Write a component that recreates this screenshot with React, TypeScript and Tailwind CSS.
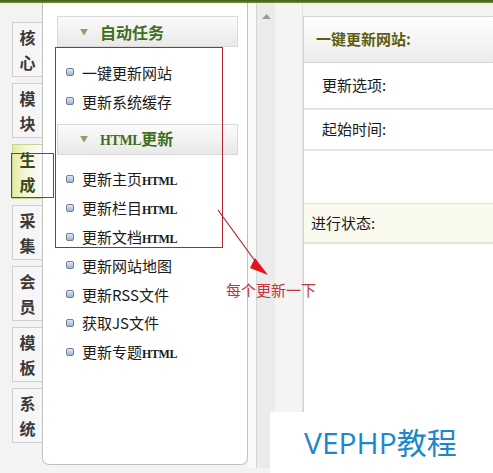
import React from "react";

const cjk = "font-['Noto_Sans_CJK_SC','Noto_Sans',sans-serif]";

const tabs = ["核心", "模块", "生成", "采集", "会员", "模板", "系统"];

function Html({ className = "" }: { className?: string }) {
  return (
    <span className={`font-['Liberation_Serif',serif] font-bold text-[12px] tracking-[-0.4px] ${className}`}>
      HTML
    </span>
  );
}

function Bullet() {
  return (
    <span className="w-[8px] h-[8px] rounded-[2px] border border-[#6f7f99] bg-gradient-to-b from-[#dfe8f5] to-[#9fb2cf] shrink-0" />
  );
}

function Item({ children }: { children: React.ReactNode }) {
  return (
    <div className="flex items-center gap-[8px] pl-[23px] h-[28.8px] text-[15px] text-[#1a1a1a]">
      <Bullet />
      <span className="leading-none">{children}</span>
    </div>
  );
}

function SectionHead({ children }: { children: React.ReactNode }) {
  return (
    <div className="ml-[14px] mr-[9px] h-[31px] flex items-center border border-[#dadada] bg-gradient-to-b from-[#fbfbfb] to-[#e9e9e9]">
      <span className="ml-[22px] text-[8px] text-[#86a266]">▼</span>
      <span className="ml-[12px] text-[16px] font-bold text-[#3f6e1c] leading-none">{children}</span>
    </div>
  );
}

export default function App() {
  return (
    <div className={`relative w-[493px] h-[473px] overflow-hidden bg-[#f3f3f3] ${cjk}`}>
      {/* top bar */}
      <div className="h-[3px] bg-gradient-to-b from-[#3f5d14] to-[#6f8f35]" />

      <div className="flex h-[465px]">
        {/* tabs */}
        <div className="w-[42px] pt-[19px] pl-[12px] flex flex-col gap-[6px]">
          {tabs.map((t, i) => (
            <div
              key={t}
              className={`w-[30px] h-[55px] flex flex-col items-center justify-center border border-r-0 text-[16px] font-bold leading-[25px] ${
                i === 2
                  ? "border-[#c9d393] bg-gradient-to-r from-[#e3ed9c] via-[#f6f8e4] to-[#fafafa] text-[#3b4a14]"
                  : "border-[#cfcfcf] bg-[#f6f6f6] text-[#3a3a3a]"
              }`}
            >
              <span>{t[0]}</span>
              <span>{t[1]}</span>
            </div>
          ))}
        </div>

        {/* left menu panel */}
        <div className="w-[206px] h-[462px] bg-white border-x border-b border-[#c2c2c2] rounded-b-[7px] pt-[13px]">
          <SectionHead>自动任务</SectionHead>
          <div className="pt-[11px] pb-[8px]">
            <Item>一键更新网站</Item>
            <Item>更新系统缓存</Item>
          </div>
          <SectionHead>
            <Html className="text-[14px] text-[#3f6e1c]" />更新
          </SectionHead>
          <div className="pt-[10px]">
            <Item>
              更新主页<Html />
            </Item>
            <Item>
              更新栏目<Html />
            </Item>
            <Item>
              更新文档<Html />
            </Item>
            <Item>更新网站地图</Item>
            <Item>更新RSS文件</Item>
            <Item>获取JS文件</Item>
            <Item>
              更新专题<Html />
            </Item>
          </div>
        </div>

        {/* splitter + scroll bar */}
        <div className="w-[9px] bg-[#f9f9f9] border-r border-[#d4d4d4]" />
        <div className="w-[18px] bg-[#ebebeb] flex justify-center pt-[11px]">
          <svg width="9" height="5" viewBox="0 0 9 5">
            <path d="M0 5 L4.5 0 L9 5 Z" fill="#9a9a9a" />
          </svg>
        </div>
        <div className="w-[28px] bg-[#f4f4f4] border-r border-[#e0e0e0]" />

        {/* main */}
        <div className="flex-1 pt-[13px] flex flex-col">
          <div className="flex-1 bg-white border-l border-t border-[#d3d3d3]">
            <div className="h-[46px] flex items-center pl-[12px] bg-gradient-to-b from-[#ffffff] to-[#ececec] border-b border-[#d6d6d6] text-[15px] font-bold text-[#5d5d0c]">
              一键更新网站:
            </div>
            <div className="h-[47px] flex items-center pl-[18px] border-b-2 border-[#e4e4e4] text-[15px] text-[#1a1a1a]">
              更新选项:
            </div>
            <div className="h-[41px] flex items-center pl-[18px] border-b-2 border-[#e4e4e4] text-[15px] text-[#1a1a1a]">
              起始时间:
            </div>
            <div className="h-[53px] border-b border-[#e2e2e2]" />
            <div className="h-[40px] flex items-center pl-[7px] bg-[#f9f9ee] border-b-2 border-[#e6e6dc] text-[15px] text-[#1a1a1a]">
              进行状态:
            </div>
          </div>
        </div>
      </div>

      {/* annotations */}
      <div className="absolute left-[55px] top-[47px] w-[168px] h-[201px] border-[1.5px] border-[#b3262c]" />
      <div className="absolute left-[11px] top-[153px] w-[43px] h-[45px] border-[1.5px] border-[#b3262c]" />
      <svg className="absolute left-0 top-0" width="493" height="473">
        <line x1="218" y1="210" x2="258" y2="265" stroke="#b3262c" strokeWidth="1.2" />
        <path d="M255 258 L268 275 L250 268 Z" fill="#e0141c" />
      </svg>
      <div className="absolute left-[226px] top-[280px] text-[15px] leading-[20px] text-[#c4343a]">每个更新一下</div>

      {/* watermark */}
      <div className="absolute left-[270px] top-[412px] w-[223px] h-[61px] bg-white flex items-center pl-[34px]">
        <span className="font-['Open_Sans','Noto_Sans_CJK_SC',sans-serif] text-[30px] leading-none text-[#1c87cc]">
          VEPHP教程
        </span>
      </div>
    </div>
  );
}
